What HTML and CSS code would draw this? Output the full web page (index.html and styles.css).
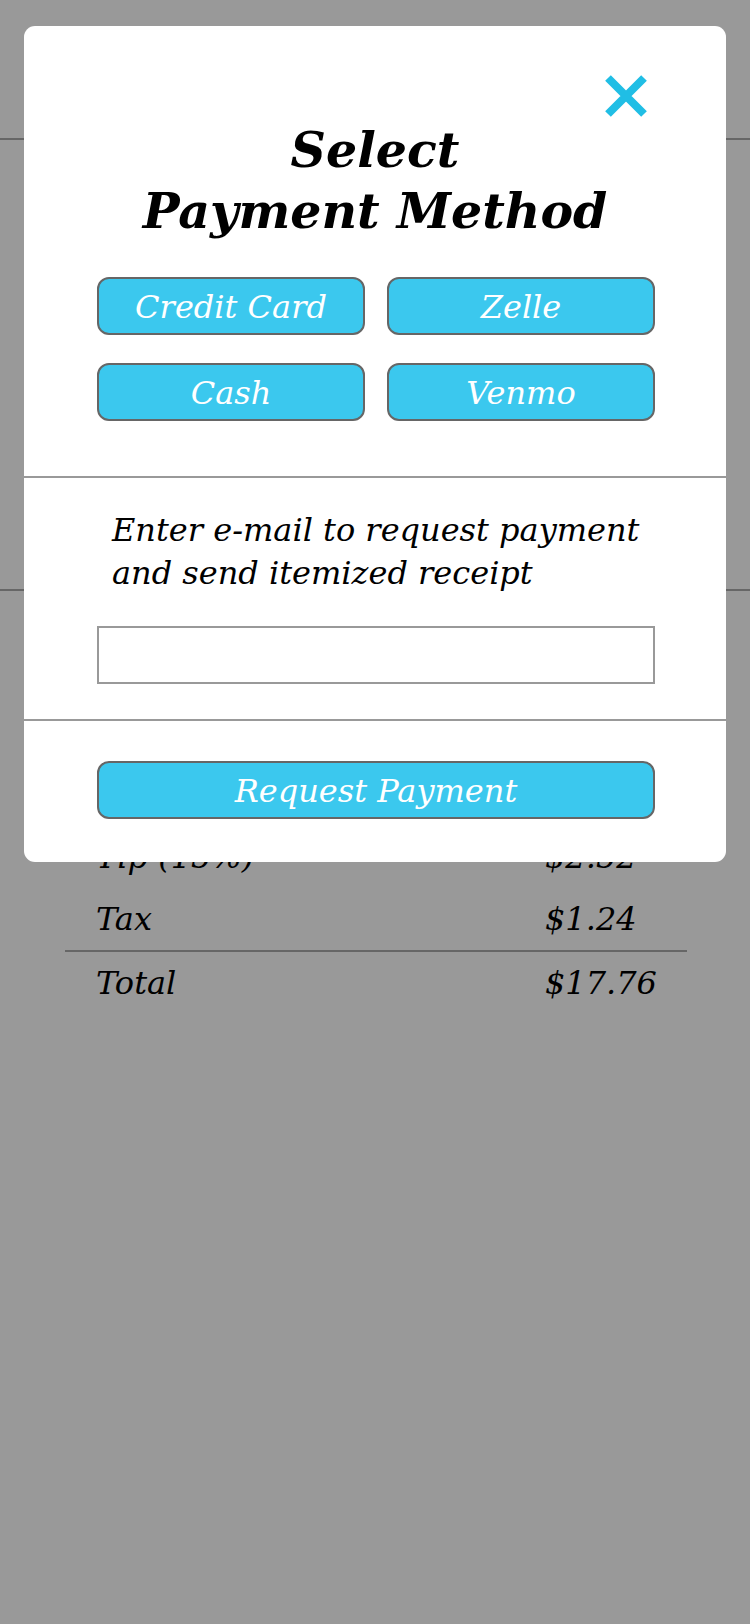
FILE: index.html
```html
<!DOCTYPE html>
<html>
<head>
<meta charset="utf-8">
<link rel="stylesheet" href="styles.css">
</head>
<body>
<div class="page">
  <div class="top-bar"></div>
  <div class="items"></div>
  <div class="totals">
    <div class="row"><span>Tip (15%)</span><span>$2.52</span></div>
    <div class="row"><span>Tax</span><span>$1.24</span></div>
    <div class="row total"><span>Total</span><span>$17.76</span></div>
  </div>
</div>

<div class="modal">
  <button class="close" aria-label="Close">
    <svg width="44" height="42" viewBox="0 0 44 42"><path d="M4 3 L40 39 M40 3 L4 39" stroke="#20bee5" stroke-width="8" fill="none"/></svg>
  </button>
  <section class="sec methods">
    <h1 class="title">Select<br>Payment Method</h1>
    <div class="grid">
      <button class="btn">Credit Card</button>
      <button class="btn">Zelle</button>
      <button class="btn">Cash</button>
      <button class="btn">Venmo</button>
    </div>
  </section>
  <section class="sec email">
    <p class="hint">Enter e-mail to request payment<br>and send itemized receipt</p>
    <input class="field" type="text">
  </section>
  <section class="sec submit">
    <button class="btn wide">Request Payment</button>
  </section>
</div>
</body>
</html>
```
FILE: styles.css
```css
* { box-sizing: border-box; }
html, body { margin: 0; padding: 0; }
body {
  width: 750px;
  height: 1624px;
  background: #999999;
  font-family: "DejaVu Serif", serif;
  font-style: italic;
  color: #000;
  position: relative;
  overflow: hidden;
}
.page { display: flex; flex-direction: column; }
.top-bar { height: 140px; border-bottom: 2px solid #666; }
.items { height: 451px; border-bottom: 2px solid #666; }
.totals { margin: 235px 63px 0 65px; }
.row {
  display: grid;
  grid-template-columns: 449px 1fr;
  padding-left: 31px;
  font-size: 32px;
  line-height: 62px;
}
.row.total { border-top: 2px solid #666; }

.modal {
  position: absolute;
  left: 24px;
  top: 26px;
  width: 702px;
  height: 836px;
  background: #fff;
  border-radius: 11px;
  display: flex;
  flex-direction: column;
}
.close {
  position: absolute;
  left: 580px;
  top: 49px;
  width: 44px;
  height: 42px;
  padding: 0;
  border: 0;
  background: none;
  display: block;
}
.close svg { display: block; }
.sec { border-bottom: 2px solid #999; }
.sec.submit { border-bottom: 0; }
.methods { padding: 94px 0 55px 73px; }
.title {
  margin: 0;
  font-size: 49px;
  line-height: 61px;
  font-weight: bold;
  text-align: center;
  width: 556px;
}
.grid {
  margin-top: 35px;
  display: grid;
  grid-template-columns: 268px 268px;
  grid-auto-rows: 58px;
  column-gap: 22px;
  row-gap: 28px;
}
.btn {
  font-family: "DejaVu Serif", serif;
  font-style: italic;
  font-size: 32px;
  color: #fff;
  background: #3bc8ee;
  border: 2px solid #666;
  border-radius: 12px;
  padding: 0;
  height: 58px;
  line-height: 56px;
}
.email { padding: 31px 0 35px 73px; }
.hint {
  margin: 0 0 0 15px;
  font-size: 32px;
  line-height: 43px;
}
.field {
  display: block;
  margin-top: 31px;
  width: 558px;
  height: 58px;
  border: 2px solid #999;
  border-radius: 0;
  background: #fff;
}
.submit { padding: 40px 0 0 73px; }
.btn.wide { width: 558px; display: block; }
```
